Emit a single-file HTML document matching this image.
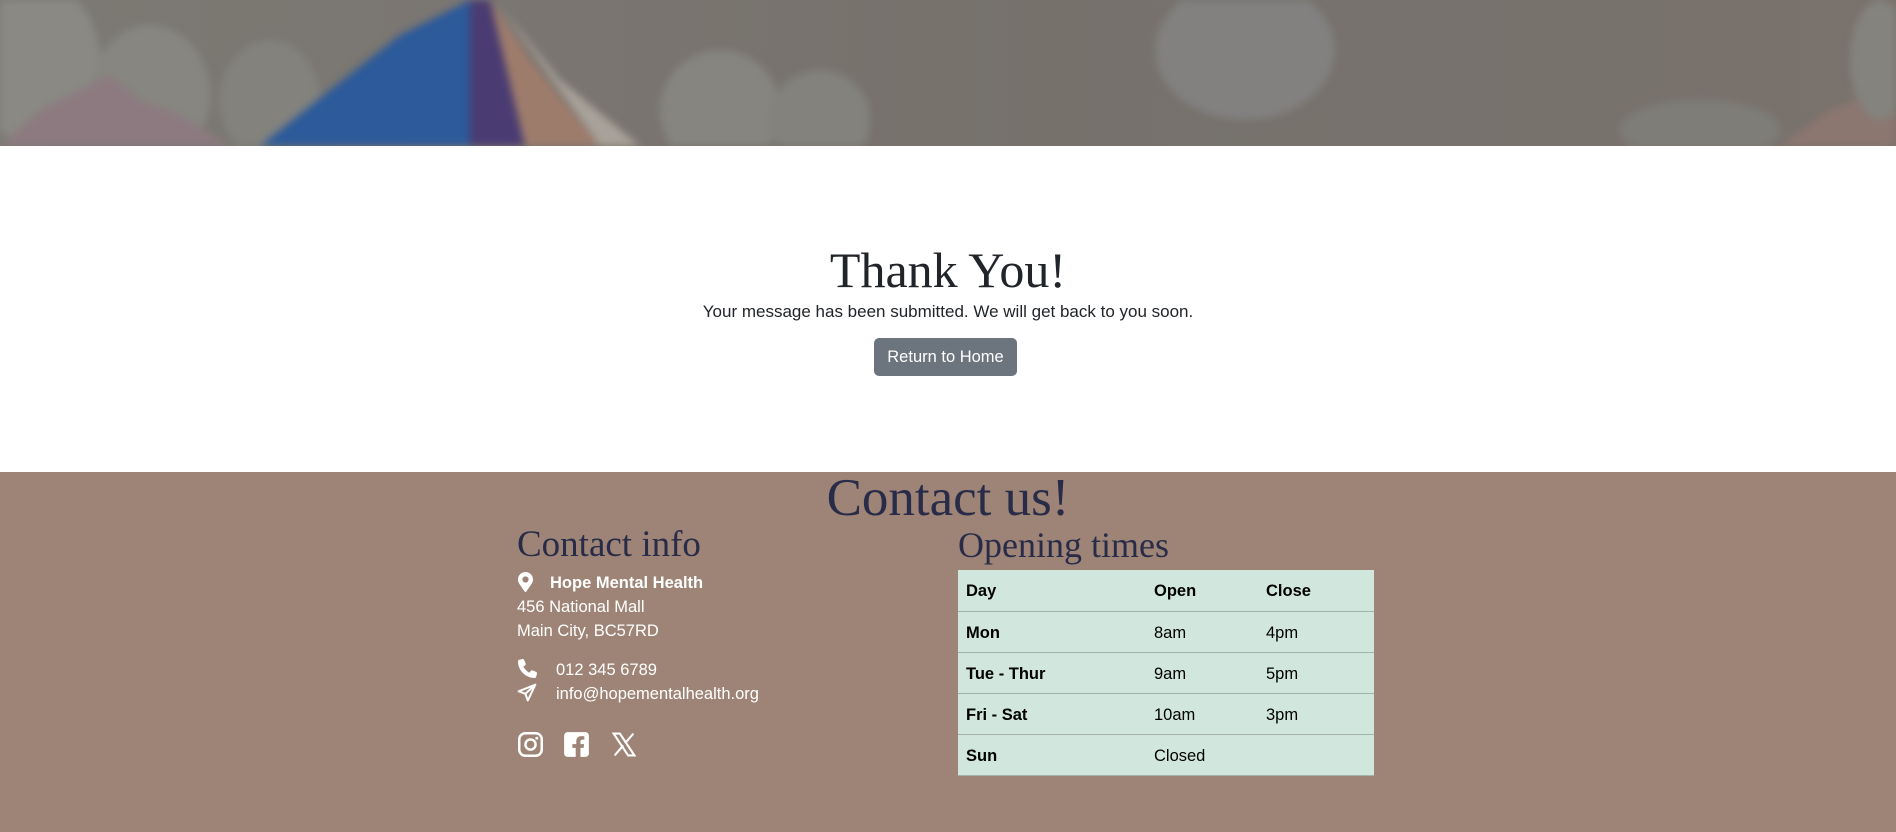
<!DOCTYPE html>
<html><head><meta charset="utf-8"><style>
*{margin:0;padding:0;box-sizing:border-box}
body{width:1896px;height:832px;overflow:hidden;font-family:"Liberation Sans",sans-serif;background:#fff;position:relative}
.hdr{position:absolute;left:0;top:0;width:1896px;height:146px;background:linear-gradient(90deg,#7c7a74 0%,#7a7570 30%,#76716b 55%,#77726d 75%,#7a726c 100%);overflow:hidden}
.abs{position:absolute}
h1{position:absolute;left:0;width:1896px;text-align:center;top:240px;font-weight:400;font-size:50px;color:#212529;font-family:"Liberation Serif",serif;line-height:60px}
.sub{position:absolute;left:0;width:1896px;text-align:center;top:302px;font-size:17px;color:#212529}
.btn{position:absolute;left:874px;top:338px;width:143px;height:38px;background:#6c757d;color:#fff;border-radius:5px;font-size:16.5px;text-align:center;line-height:39px}
.foot{position:absolute;left:0;top:472px;width:1896px;height:360px;background:#9e8476}
.h2{font-family:"Liberation Serif",serif;color:#292c48;font-weight:400;position:absolute}
.w{color:#fff;font-size:16.5px;position:absolute;white-space:nowrap}
table{position:absolute;left:958px;top:570px;width:416px;border-collapse:collapse;background:#d1e6dd;font-size:16.5px;color:#000}
td{height:41px;border-bottom:1px solid #a3b3ab;padding-left:8px;padding-top:3px}
td.b{font-weight:bold}
</style></head><body>
<div class="hdr">
<svg width="1896" height="146" viewBox="0 0 1896 146" style="filter:blur(4px)">
<ellipse cx="30" cy="60" rx="70" ry="80" fill="#8a8983"/>
<ellipse cx="150" cy="95" rx="60" ry="70" fill="#878680"/>
<ellipse cx="270" cy="100" rx="50" ry="60" fill="#83827d"/>
<path d="M0 146 L40 110 L70 95 L110 75 L140 100 L180 115 L230 146Z" fill="#8c7a80"/>
<path d="M260 146 L330 90 L400 35 L470 0 L490 0 L520 60 L560 146Z" fill="#2c5a9a"/>
<path d="M470 0 L490 0 L505 60 L525 146 L470 146Z" fill="#4a3c72"/>
<path d="M490 0 L530 60 L570 110 L600 146 L525 146Z" fill="#9e7c6c"/>
<path d="M495 0 L560 80 L640 146 L600 146Z" fill="#a8a29a"/>
<ellipse cx="720" cy="110" rx="60" ry="60" fill="#86857f"/>
<ellipse cx="820" cy="120" rx="50" ry="50" fill="#83827c"/>
<ellipse cx="1245" cy="50" rx="90" ry="70" fill="#828180"/>
<ellipse cx="1700" cy="130" rx="80" ry="30" fill="#7e7d77"/>
<path d="M1780 146 L1830 110 L1870 95 L1896 90 L1896 146Z" fill="#8c7670"/>
<ellipse cx="1880" cy="60" rx="30" ry="60" fill="#84837d"/>
</svg>
</div>
<h1>Thank You!</h1>
<div class="sub">Your message has been submitted. We will get back to you soon.</div>
<div class="btn">Return to Home</div>
<div class="foot"></div>
<div class="h2" style="left:0;width:1896px;text-align:center;top:468px;font-size:53px">Contact us!</div>
<div class="h2" style="left:517px;top:523px;font-size:37px">Contact info</div>
<div class="h2" style="left:958px;top:524px;font-size:36px">Opening times</div>
<svg class="abs" style="left:518px;top:572px" width="15" height="20" viewBox="0 0 384 512"><path fill="#fff" d="M192 0C86 0 0 86 0 192c0 77 27 99 172 309a24 24 0 0 0 40 0C357 291 384 269 384 192 384 86 298 0 192 0zm0 272a80 80 0 1 1 0-160 80 80 0 0 1 0 160z"/></svg>
<div class="w" style="left:550px;top:574px;font-weight:bold">Hope Mental Health</div>
<div class="w" style="left:517px;top:598px">456 National Mall</div>
<div class="w" style="left:517px;top:622px">Main City, BC57RD</div>
<svg class="abs" style="left:518px;top:659px" width="19" height="19" viewBox="0 0 512 512"><path fill="#fff" d="M164 25c-8-19-29-29-48-24L28 25C11 30 0 45 0 62c0 248 202 450 450 450 17 0 32-11 37-28l24-88c5-19-5-40-24-48l-96-40c-16-7-35-2-46 12l-40 49C235 330 182 277 145 207l49-40c14-11 19-30 12-46L164 25z"/></svg>
<div class="w" style="left:556px;top:661px">012 345 6789</div>
<svg class="abs" style="left:517px;top:683px" width="20" height="20" viewBox="0 0 24 24"><path fill="none" stroke="#fff" stroke-width="2.4" stroke-linejoin="round" d="M22 2L2 10l8 3 3 8 9-19zM10 13l12-11"/></svg>
<div class="w" style="left:556px;top:685px">info@hopementalhealth.org</div>
<svg class="abs" style="left:517px;top:731px" width="27" height="27" viewBox="0 0 24 24"><rect x="2" y="2" width="20" height="20" rx="5.5" fill="none" stroke="#fff" stroke-width="2.2"/><circle cx="12" cy="12" r="4.5" fill="none" stroke="#fff" stroke-width="2.2"/><circle cx="17.6" cy="6.4" r="1.3" fill="#fff"/></svg>
<svg class="abs" style="left:563px;top:731px" width="27" height="27" viewBox="0 0 24 24"><path fill="#fff" d="M4 1h16a3 3 0 0 1 3 3v16a3 3 0 0 1-3 3h-4.5v-8h2.8l.5-3.3h-3.3V9.5c0-1 .5-1.8 2-1.8h1.5V4.9s-1.4-.3-2.7-.3c-2.8 0-4.5 1.7-4.5 4.7v2.4H8.3V15h3v8H4a3 3 0 0 1-3-3V4a3 3 0 0 1 3-3z"/></svg>
<svg class="abs" style="left:611px;top:732px" width="26" height="25" viewBox="0 0 24 24"><path fill="none" stroke="#fff" stroke-width="2" d="M2 1.5h6l14 21h-6zM21 1.5l-8 9.3M3 22.5l8.3-9.6"/></svg>
<table>
<tr><td class="b" style="width:188px">Day</td><td class="b" style="width:112px">Open</td><td class="b">Close</td></tr>
<tr><td class="b">Mon</td><td>8am</td><td>4pm</td></tr>
<tr><td class="b">Tue - Thur</td><td>9am</td><td>5pm</td></tr>
<tr><td class="b">Fri - Sat</td><td>10am</td><td>3pm</td></tr>
<tr><td class="b">Sun</td><td>Closed</td><td></td></tr>
</table>
</body></html>
